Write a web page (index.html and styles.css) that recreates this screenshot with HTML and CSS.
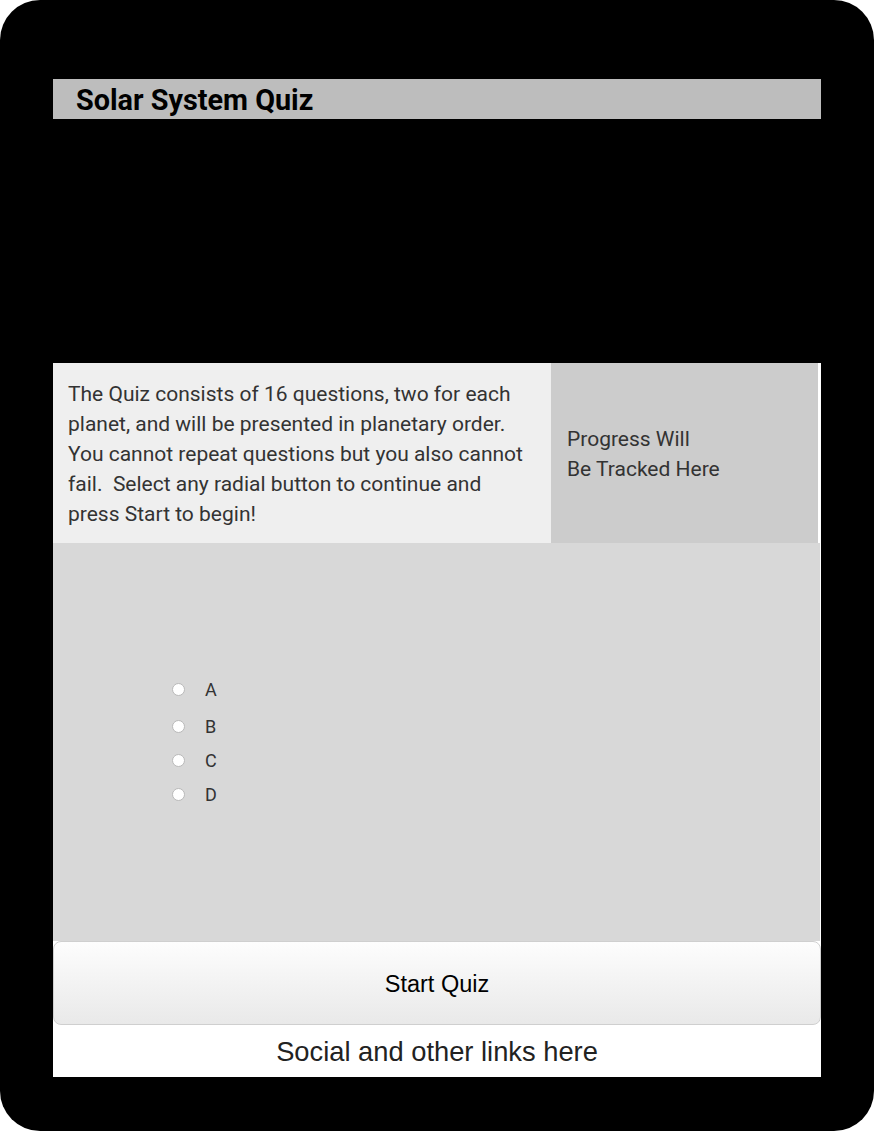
FILE: index.html
```html
<!DOCTYPE html>
<html>
<head>
<meta charset="utf-8">
<link rel="stylesheet" href="styles.css">
</head>
<body>
<div class="frame">
  <div class="page">
    <header class="titlebar"><h1 class="title">Solar System Quiz</h1></header>
    <div class="spacer"></div>
    <div class="content">
      <section class="intro">
        <div class="intro-text">The Quiz consists of 16 questions, two for each planet, and will be presented in planetary order. You cannot repeat questions but you also cannot fail.&nbsp; Select any radial button to continue and press Start to begin!</div>
        <div class="progress">Progress Will<br>Be Tracked Here</div>
      </section>
      <section class="question">
        <ul class="answers">
          <li class="answer"><span class="radio"></span><span class="label">A</span></li>
          <li class="answer"><span class="radio"></span><span class="label">B</span></li>
          <li class="answer"><span class="radio"></span><span class="label">C</span></li>
          <li class="answer"><span class="radio"></span><span class="label">D</span></li>
        </ul>
      </section>
      <button class="start">Start Quiz</button>
      <footer class="footer">Social and other links here</footer>
    </div>
  </div>
</div>
</body>
</html>
```
FILE: styles.css
```css
html, body {
  margin: 0;
  padding: 0;
  background: #ffffff;
}
.frame {
  width: 874px;
  height: 1131px;
  background: #000;
  border-radius: 40px;
  overflow: hidden;
}
.page {
  padding: 79px 53px 0 53px;
  display: flex;
  flex-direction: column;
}
.titlebar {
  height: 40px;
  background: #bdbdbd;
  display: flex;
  align-items: center;
  padding-left: 23px;
}
.title {
  margin: 0;
  font-family: Roboto, "Liberation Sans", sans-serif;
  font-weight: 700;
  font-size: 28.8px;
  color: #000;
  line-height: 40px;
  padding-top: 2px;
}
.spacer {
  height: 244px;
}
.content {
  width: 768px;
  background: #fff;
  display: flex;
  flex-direction: column;
}
.intro {
  display: flex;
  height: 180px;
  font-family: Roboto, "Liberation Sans", sans-serif;
  font-size: 21px;
  line-height: 30px;
  color: #333;
}
.intro-text {
  width: 498px;
  box-sizing: border-box;
  background: #efefef;
  padding: 16px 15px 0 15px;
}
.progress {
  width: 267px;
  box-sizing: border-box;
  background: #cccccc;
  padding: 61px 0 0 16px;
}
.question {
  width: 767px;
  height: 398px;
  background: #d8d8d8;
}
.answers {
  list-style: none;
  margin: 0;
  padding: 135px 0 0 119px;
  display: flex;
  flex-direction: column;
  gap: 12px;
}
.answer {
  display: flex;
  align-items: center;
  height: 22px;
  font-family: Roboto, "Liberation Sans", sans-serif;
  font-size: 18px;
  color: #333;
}
.answers .answer:nth-child(2) { margin-top: 3px; }
.radio {
  width: 11px;
  height: 11px;
  border: 1px solid #b9b9b9;
  border-radius: 50%;
  background: #fff;
  margin-right: 20px;
}
.start {
  height: 84px;
  width: 768px;
  border: 1px solid #cfcfcf;
  border-radius: 8px;
  background: linear-gradient(#fdfdfd, #e9e9e9);
  font-family: "Liberation Sans", Arial, sans-serif;
  font-size: 23.5px;
  color: #000;
  padding: 3px 0 0 0;
  margin: 0;
}
.footer {
  height: 52px;
  background: #fff;
  text-align: center;
  font-family: "Liberation Sans", Arial, sans-serif;
  font-size: 27.3px;
  line-height: 54px;
  color: #222;
}
```
